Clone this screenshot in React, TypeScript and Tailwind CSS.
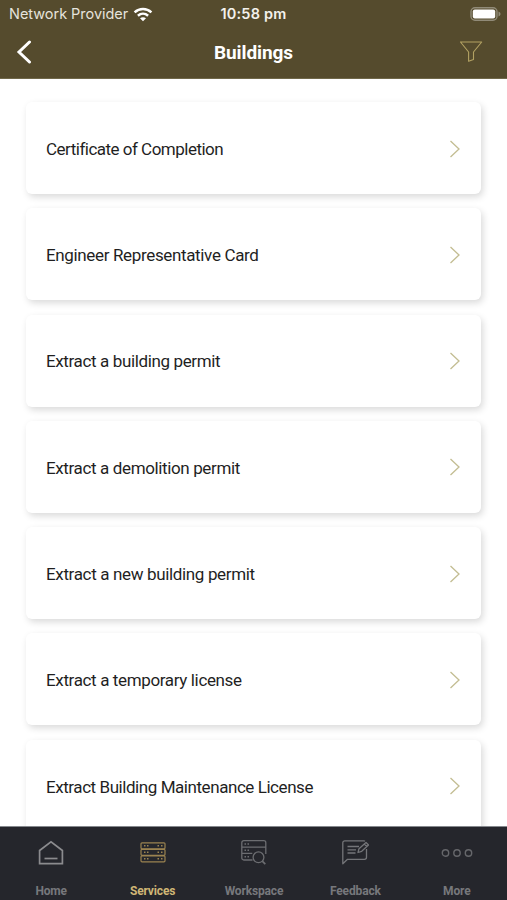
import React from "react";
import clsx from "clsx";

interface IService {
  name: string;
  tracking: string;
}

const SERVICES: IService[] = [
  { name: "Certificate of Completion", tracking: "tracking-[-0.51px]" },
  { name: "Engineer Representative Card", tracking: "tracking-[-0.35px]" },
  { name: "Extract a building permit", tracking: "tracking-[-0.37px]" },
  { name: "Extract a demolition permit", tracking: "tracking-[-0.37px]" },
  { name: "Extract a new building permit", tracking: "tracking-[-0.35px]" },
  { name: "Extract a temporary license", tracking: "tracking-[-0.36px]" },
  { name: "Extract Building Maintenance License", tracking: "tracking-[-0.44px]" },
];

const WifiIcon = () => (
  <svg className="ml-[5px] h-[15px] w-5" viewBox="0 0 20 15" fill="none" stroke="#fff" strokeWidth="2.5">
    <path d="M1.6 5.3C6.4.9 13.6.9 18.4 5.3" />
    <path d="M4.9 8.8c3-2.7 7.2-2.7 10.2 0" />
    <path d="M10 14.2 7 11.3c1.8-1.5 4.2-1.5 6 0z" fill="#fff" stroke="none" />
  </svg>
);

const BatteryIcon = () => (
  <svg className="h-[15px] w-[31px]" viewBox="0 0 31 15" fill="none">
    <rect x="1" y="0.7" width="26" height="12.6" rx="4" stroke="#918b78" strokeWidth="1.4" />
    <rect x="2.800" y="2.500" width="22.400" height="9" rx="2" fill="#fff" />
    <path d="M28.5 4.500v5c1.2-.5 2-1.300 2-2.500s-.8-2-2-2.500z" fill="#918b78" />
  </svg>
);

const FilterIcon = () => (
  <svg className="h-[22px] w-6" viewBox="0 0 24 22" fill="none" stroke="#b3a263" strokeWidth="1.1" strokeLinejoin="round">
    <path d="M1.500 1h21.200L14.500 11v7.500L9.600 20.300V11z" />
  </svg>
);

const HomeIcon = () => (
  <svg className="h-7 w-7" viewBox="0 0 28 28" fill="none" stroke="#8b8b8e" strokeWidth="1.700">
    <path d="M2.600 10.500 14 1.800l11.400 8.700v13.200H2.600z" />
    <path d="M7.500 18.500h13" />
  </svg>
);

const ServicesIcon = () => (
  <svg className="h-7 w-7" viewBox="0 0 28 28" fill="none" stroke="#9b8350" strokeWidth="1.200">
    <rect x="2" y="2.800" width="24" height="6" rx="1" />
    <rect x="2" y="9.300" width="24" height="6" rx="1" />
    <rect x="2" y="15.800" width="24" height="6" rx="1" />
    <path
      d="M5 5.800h1.500M8 5.800h1.500M18.500 5.800H20M22 5.800h1.500M5 12.300h1.500M8 12.300h1.500M18.500 12.300H20M22 12.300h1.500M5 18.800h1.500M8 18.800h1.500M18.500 18.800H20M22 18.800h1.500"
      strokeWidth="1.500"
    />
  </svg>
);

const WorkspaceIcon = () => (
  <svg className="h-7 w-7" viewBox="0 0 28 28" fill="none" stroke="#6c6d71" strokeWidth="1.300">
    <path d="M12.500 20H3.800a2 2 0 0 1-2-2V2.700a2 2 0 0 1 2-2h20a2 2 0 0 1 2 2V14M1.800 7.100h24M1.800 13.400h10.500" />
    <path d="M4.500 4H6M7.500 4H9M4.500 10.200H6M7.500 10.200H9M4.500 16.700H6M7.500 16.700H9" strokeWidth="1.600" />
    <circle cx="18.500" cy="17.300" r="5.400" />
    <path d="m22.300 21.200 3 3" strokeWidth="1.700" />
  </svg>
);

const FeedbackIcon = () => (
  <svg className="h-7 w-7" viewBox="0 0 28 28" fill="none" stroke="#747579" strokeWidth="1.300" strokeLinejoin="round">
    <path d="M24 1.200A2 2 0 0 0 23 .8H3.800a2 2 0 0 0-2 2v21l4.700-4.500h17a2 2 0 0 0 2-2V9" />
    <path d="M6.500 6.500H18M6.500 9.800h8.500M6.500 13h8" />
    <path d="m17 12.500 1-3.800 7-6.200 2.500 2.500-6.800 6.300zM23.300 4l2.500 2.500" />
  </svg>
);

const MoreIcon = () => (
  <svg className="h-7 w-8" viewBox="0 0 32 28" fill="none" stroke="#66676b" strokeWidth="1.400">
    <circle cx="4.500" cy="13" r="3.200" />
    <circle cx="16" cy="13" r="3.200" />
    <circle cx="27.500" cy="13" r="3.200" />
  </svg>
);

const TABS = [
  { title: "Home", icon: <HomeIcon /> },
  { title: "Services", icon: <ServicesIcon />, active: true },
  { title: "Workspace", icon: <WorkspaceIcon /> },
  { title: "Feedback", icon: <FeedbackIcon /> },
  { title: "More", icon: <MoreIcon /> },
];

const ServiceCard = ({ name, tracking }: IService) => (
  <div className="flex h-[92px] shrink-0 items-center justify-between rounded-md bg-white pr-[21px] pl-5 shadow-[2px_3px_7px_rgba(0,0,0,0.15)]">
    <p className={clsx("pt-[3px] text-[17px] whitespace-nowrap text-[#1f1f1f]", tracking)}>{name}</p>
    <svg className="mt-px h-[18px] w-[11px]" viewBox="0 0 11 18" fill="none" stroke="#c3bd92" strokeWidth="1.300">
      <path d="m1.500 1 8.500 8-8.500 8" />
    </svg>
  </div>
);

export default function App() {
  return (
    <div className="flex h-[900px] w-[507px] flex-col overflow-hidden bg-white font-['Roboto','Noto_Sans',sans-serif]">
      <header className="h-[79px] shrink-0 border-b border-[#706849] bg-[#554b2d] text-white">
        <div className="grid h-7 grid-cols-[1fr_auto_1fr] items-center pr-[6px] pl-[9px] font-['Inter',sans-serif]">
          <div className="flex items-center">
            <span className="text-[14.500px] tracking-[-0.030px] text-[#e6e3dc]">Network Provider</span>
            <WifiIcon />
          </div>
          <span className="mr-[3px] text-[14.500px] font-semibold tracking-[0.200px] text-[#f3f1ec]">10:58 pm</span>
          <div className="flex justify-end">
            <BatteryIcon />
          </div>
        </div>
        <div className="grid h-12 grid-cols-3 items-center px-4">
          <svg className="h-6 w-4" viewBox="0 0 16 24" fill="none" stroke="#fff" strokeWidth="3" strokeLinecap="round">
            <path d="M13.500 2 3 12l10.500 10" />
          </svg>
          <h1 className="pt-[2px] text-center text-[19px] font-bold tracking-[-0.080px]">Buildings</h1>
          <div className="flex justify-end pr-2">
            <FilterIcon />
          </div>
        </div>
      </header>
      <main className="flex min-h-0 flex-1 flex-col gap-[14.300px] overflow-hidden px-[26px] pt-[23px]">
        {SERVICES.map((s) => (
          <ServiceCard key={s.name} {...s} />
        ))}
      </main>
      <nav className="grid h-[74px] shrink-0 grid-cols-5 border-t border-[#85888d] bg-[#25262c]">
        {TABS.map(({ title, icon, active }) => (
          <div key={title} className="flex flex-col items-center pt-[13px] pl-px">
            {icon}
            <span
              className={clsx(
                "mt-[15px] text-[12px] leading-4 font-bold tracking-[-0.150px]",
                active ? "text-[#d0b676]" : "text-[#77787c]"
              )}
            >
              {title}
            </span>
          </div>
        ))}
      </nav>
    </div>
  );
}
